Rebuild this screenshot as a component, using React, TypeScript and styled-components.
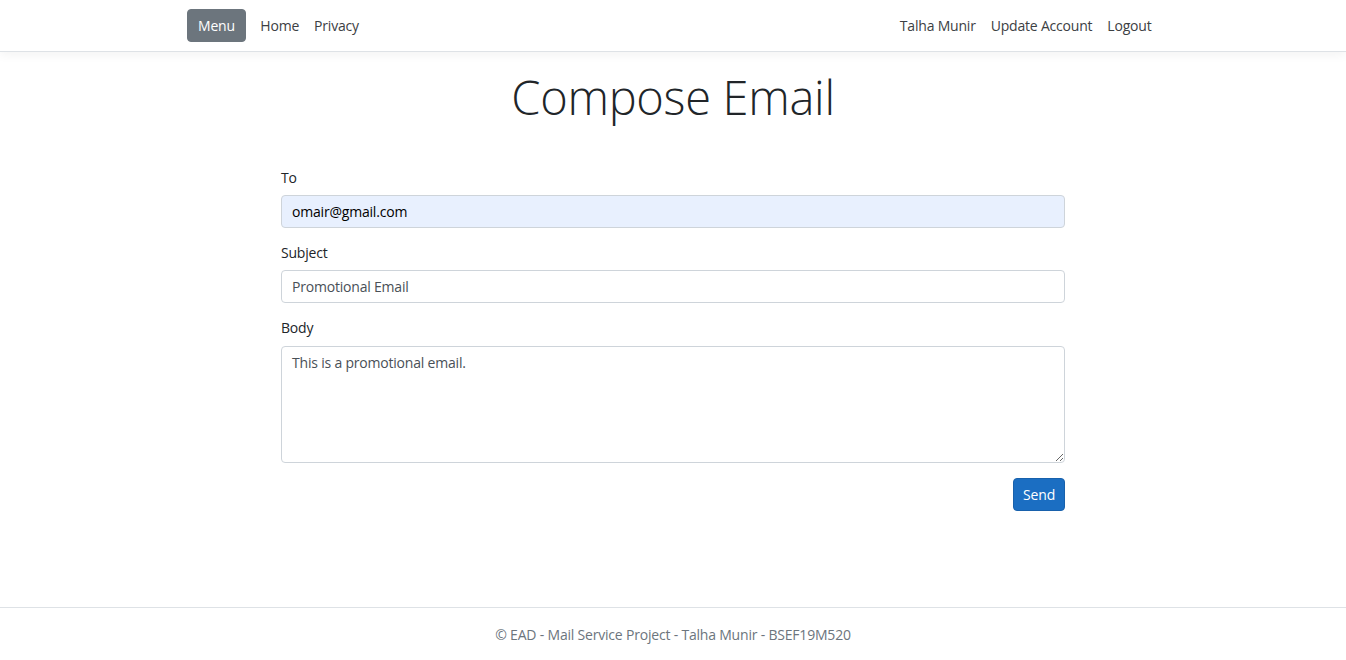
import styled, { createGlobalStyle } from 'styled-components';

const GlobalStyle = createGlobalStyle`
  html, body {
    margin: 0;
    padding: 0;
    height: 100%;
  }

  body {
    font-family: 'Open Sans', 'Noto Sans', Arial, sans-serif;
    font-size: 14px;
    line-height: 1.5;
    letter-spacing: -0.2px;
    color: #212529;
    background: #fff;
  }

  #root {
    min-height: 100%;
    display: flex;
    flex-direction: column;
  }

  * {
    box-sizing: border-box;
  }
`;

const Page = styled.div`
  flex: 1;
  display: flex;
  flex-direction: column;
  min-height: 100vh;
`;

const Navbar = styled.header`
  height: 52px;
  background: #fff;
  border-bottom: 1px solid #dee2e6;
  box-shadow: 0 3px 10px rgba(0, 0, 0, 0.05);
`;

const NavInner = styled.nav`
  max-width: 972px;
  height: 100%;
  margin: 0 auto;
  display: flex;
  align-items: center;
  justify-content: space-between;
`;

const NavGroup = styled.div`
  display: flex;
  align-items: center;
`;

const MenuButton = styled.button`
  height: 33px;
  padding: 0 10px;
  margin-right: 7px;
  border: 1px solid #6c757d;
  border-radius: 4px;
  background: #6c757d;
  color: #fff;
  font: inherit;
  font-size: 14px;
  letter-spacing: -0.2px;
`;

const NavLink = styled.a`
  padding: 8px 7.5px;
  color: #3c4043;
  font-size: 14px;
  text-decoration: none;
  cursor: pointer;
`;

const Main = styled.main`
  width: 784px;
  margin: 0 auto;
  padding-top: 17px;
`;

const Title = styled.h1`
  margin: 0 0 42px;
  text-align: center;
  font-size: 47px;
  font-weight: 300;
  line-height: 1.2;
  letter-spacing: -0.3px;
  color: #212529;
`;

const Field = styled.div<{ $gap?: number }>`
  margin-bottom: ${(p) => p.$gap ?? 14}px;
`;

const Label = styled.label<{ $gap?: number }>`
  display: block;
  margin-bottom: ${(p) => p.$gap ?? 7}px;
  font-size: 14px;
  line-height: 21px;
  color: #212529;
`;

const Input = styled.input<{ $autofill?: boolean }>`
  display: block;
  width: 100%;
  height: 33px;
  padding: 0 10px;
  border: 1px solid #ced4da;
  border-radius: 4px;
  background: ${(p) => (p.$autofill ? '#e8f0fe' : '#fff')};
  color: ${(p) => (p.$autofill ? '#000' : '#495057')};
  font: inherit;
  font-size: 14px;
  letter-spacing: -0.2px;
  outline: none;
`;

const TextArea = styled.textarea`
  display: block;
  width: 100%;
  height: 117px;
  padding: 5px 10px;
  border: 1px solid #ced4da;
  border-radius: 4px;
  color: #495057;
  font: inherit;
  font-size: 14px;
  line-height: 21px;
  letter-spacing: -0.2px;
  resize: vertical;
  outline: none;
`;

const Actions = styled.div`
  display: flex;
  justify-content: flex-end;
`;

const SendButton = styled.button`
  height: 33px;
  padding: 0 9px;
  border: 1px solid #1861ac;
  border-radius: 4px;
  background: #1b6ec2;
  color: #fff;
  font: inherit;
  font-size: 14px;
  letter-spacing: -0.2px;
`;

const Footer = styled.footer`
  margin-top: auto;
  height: 53px;
  border-top: 1px solid #dee2e6;
  text-align: center;
  line-height: 54px;
  font-size: 14px;
  color: #6c757d;
`;

export default function App() {
  return (
    <>
      <GlobalStyle />
      <Page>
        <Navbar>
          <NavInner>
            <NavGroup>
              <MenuButton>Menu</MenuButton>
              <NavLink>Home</NavLink>
              <NavLink>Privacy</NavLink>
            </NavGroup>
            <NavGroup>
              <NavLink>Talha Munir</NavLink>
              <NavLink>Update Account</NavLink>
              <NavLink>Logout</NavLink>
            </NavGroup>
          </NavInner>
        </Navbar>

        <Main>
          <Title>Compose Email</Title>
          <form onSubmit={(e) => e.preventDefault()}>
            <Field>
              <Label htmlFor="to">To</Label>
              <Input id="to" $autofill defaultValue="omair@gmail.com" />
            </Field>
            <Field>
              <Label htmlFor="subject">Subject</Label>
              <Input id="subject" defaultValue="Promotional Email" />
            </Field>
            <Field $gap={15}>
              <Label htmlFor="body" $gap={8}>
                Body
              </Label>
              <TextArea id="body" defaultValue="This is a promotional email." />
            </Field>
            <Actions>
              <SendButton type="submit">Send</SendButton>
            </Actions>
          </form>
        </Main>

        <Footer>© EAD - Mail Service Project - Talha Munir - BSEF19M520</Footer>
      </Page>
    </>
  );
}
